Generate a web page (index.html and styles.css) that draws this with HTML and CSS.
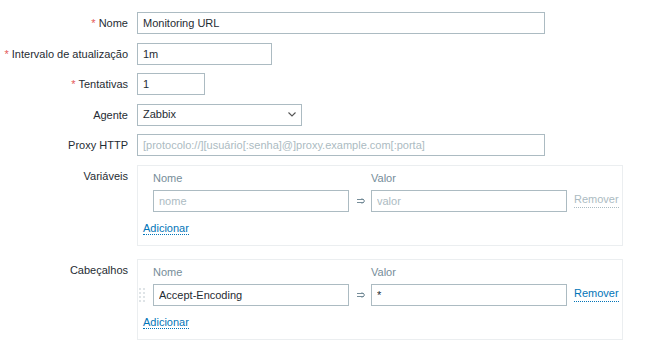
FILE: index.html
```html
<!DOCTYPE html>
<html>
<head>
<meta charset="utf-8"/>
<title>Item</title>
<meta name="viewport" content="width=device-width"/>
<link rel="stylesheet" href="styles.css">
</head>
<body>
<ul class="form-list">
    <li class="row">
        <label class="lbl"><span class="req">*</span> Nome</label>
        <div class="fld"><input type="text" class="txt w-xl" value="Monitoring URL"></div>
    </li>
    <li class="row">
        <label class="lbl"><span class="req">*</span> Intervalo de atualização</label>
        <div class="fld"><input type="text" class="txt w-md" value="1m"></div>
    </li>
    <li class="row">
        <label class="lbl"><span class="req">*</span> Tentativas</label>
        <div class="fld"><input type="text" class="txt w-sm" value="1"></div>
    </li>
    <li class="row">
        <label class="lbl">Agente</label>
        <div class="fld">
            <div class="select w-sel">
                <span>Zabbix</span>
                <svg width="8" height="5" viewBox="0 0 8 5"><path d="M0.5 0.5 L4 4 L7.5 0.5" fill="none" stroke="#555" stroke-width="1.1"/></svg>
            </div>
        </div>
    </li>
    <li class="row">
        <label class="lbl">Proxy HTTP</label>
        <div class="fld"><input type="text" class="txt w-xl" placeholder="[protocolo://][usuário[:senha]@]proxy.example.com[:porta]"></div>
    </li>
    <li class="row row-table">
        <label class="lbl">Variáveis</label>
        <div class="fld">
            <div class="pairs">
                <div class="pair pair-head"><span></span><span>Nome</span><span></span><span>Valor</span><span></span></div>
                <div class="pair">
                    <span></span>
                    <input type="text" class="txt" placeholder="nome">
                    <span class="arrow"><svg width="9" height="6" viewBox="0 0 9 6"><path d="M0 1.5H7M0 4.5H7M4.5 0.3L7.8 3L4.5 5.7" fill="none" stroke="#768d99" stroke-width="1"/></svg></span>
                    <input type="text" class="txt" placeholder="valor">
                    <a class="link disabled">Remover</a>
                </div>
                <div class="pair-foot"><a class="link">Adicionar</a></div>
            </div>
        </div>
    </li>
    <li class="row row-table">
        <label class="lbl">Cabeçalhos</label>
        <div class="fld">
            <div class="pairs">
                <div class="pair pair-head"><span></span><span>Nome</span><span></span><span>Valor</span><span></span></div>
                <div class="pair">
                    <span class="drag"><svg width="6" height="14" viewBox="0 0 6 14"><g fill="#dfe4e7"><rect x="0" y="0" width="2" height="2"/><rect x="4" y="0" width="2" height="2"/><rect x="0" y="4" width="2" height="2"/><rect x="4" y="4" width="2" height="2"/><rect x="0" y="8" width="2" height="2"/><rect x="4" y="8" width="2" height="2"/><rect x="0" y="12" width="2" height="2"/><rect x="4" y="12" width="2" height="2"/></g></svg></span>
                    <input type="text" class="txt" value="Accept-Encoding">
                    <span class="arrow"><svg width="9" height="6" viewBox="0 0 9 6"><path d="M0 1.5H7M0 4.5H7M4.5 0.3L7.8 3L4.5 5.7" fill="none" stroke="#768d99" stroke-width="1"/></svg></span>
                    <input type="text" class="txt" value="*">
                    <a class="link">Remover</a>
                </div>
                <div class="pair-foot"><a class="link">Adicionar</a></div>
            </div>
        </div>
    </li>
</ul>
</body>
</html>
```

FILE: styles.css
```css
/* reset */
html,body,ul,li,input{margin:0;padding:0;}
li{list-style:none;}
body,input{font:11px/1.2 "Liberation Sans",Arial,"DejaVu Sans",sans-serif;color:#1f2c33;}
body{background:#fff;padding-top:12px;}

.form-list{display:flex;flex-direction:column;gap:8.5px;}
.row{display:flex;align-items:flex-start;}
.row-table{padding-bottom:4.5px;}
.lbl{width:128px;padding-right:9px;text-align:right;line-height:22px;white-space:nowrap;}
.req{color:#e45959;}
.fld{flex:none;}

.txt{box-sizing:border-box;height:22px;border:1px solid #acbbc2;padding:0 5px;background:#fff;outline:0;color:#1f2c33;}
.txt::placeholder{color:#acbbc2;opacity:1;}
.w-xl{width:408px;}
.w-md{width:135px;}
.w-sm{width:68px;}
.w-sel{width:165px;}

.select{box-sizing:border-box;height:22px;border:1px solid #acbbc2;padding:0 5px 0 5px;display:flex;align-items:center;justify-content:space-between;}

.pairs{box-sizing:border-box;width:486px;height:81px;border:1px solid #ebeef0;padding:0 0 0 1px;}
.pair{display:grid;grid-template-columns:14px 196px 22px 196px auto;align-items:center;height:22px;}
.pair > .link{margin-left:7px;justify-self:start;}
.pair-head{height:24px;line-height:24px;color:#768d99;}
.arrow{display:flex;justify-content:center;padding-left:2px;}
.arrow svg{display:block;}
.drag{display:flex;align-items:center;height:22px;}
.drag svg{display:block;}
.pair-foot{margin-top:8px;line-height:16px;padding-left:4px;}

.link{color:#0275b8;text-decoration:none;border-bottom:1px dotted #0275b8;cursor:pointer;}
.link.disabled{color:#acbbc2;border-bottom-color:#acbbc2;cursor:default;}
```
